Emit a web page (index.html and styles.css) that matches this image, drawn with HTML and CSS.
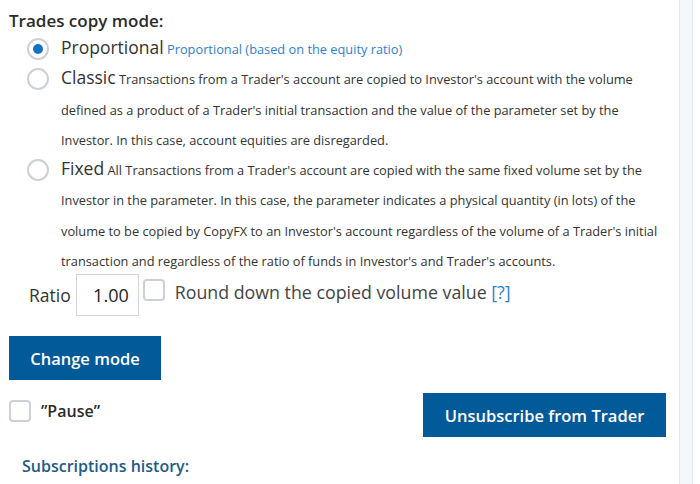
FILE: index.html
```html
<!DOCTYPE html>
<html>
<head>
<meta charset="utf-8">
<link rel="stylesheet" href="styles.css">
</head>
<body>
<div class="page">
  <main class="content">
    <h2 class="title">Trades copy mode:</h2>
    <div class="options">
      <div class="option">
        <span class="radio checked"></span>
        <p class="opt-text"><span class="opt-name">Proportional</span> <span class="opt-note">Proportional (based on the equity ratio)</span></p>
      </div>
      <div class="option">
        <span class="radio"></span>
        <p class="opt-text"><span class="opt-name">Classic</span> Transactions from a Trader's account are copied to Investor's account with the volume defined as a product of a Trader's initial transaction and the value of the parameter set by the Investor. In this case, account equities are disregarded.</p>
      </div>
      <div class="option">
        <span class="radio"></span>
        <p class="opt-text"><span class="opt-name">Fixed</span> All Transactions from a Trader's account are copied with the same fixed volume set by the Investor in the parameter. In this case, the parameter indicates a physical quantity (in lots) of the volume to be copied by CopyFX to an Investor's account regardless of the volume of a Trader's initial transaction and regardless of the ratio of funds in Investor's and Trader's accounts.</p>
      </div>
    </div>
    <div class="ratio-row">
      <span class="ratio-label">Ratio</span>
      <span class="ratio-input">1.00</span>
      <span class="checkbox"></span>
      <span class="round-label">Round down the copied volume value <span class="help">[?]</span></span>
    </div>
    <button class="btn btn-change">Change mode</button>
    <div class="pause-row">
      <div class="pause">
        <span class="checkbox"></span>
        <span class="pause-label">”Pause”</span>
      </div>
      <button class="btn btn-unsub">Unsubscribe from Trader</button>
    </div>
    <h3 class="history">Subscriptions history:</h3>
  </main>
  <div class="side-strip"></div>
</div>
</body>
</html>
```

FILE: styles.css
```css
html, body {
  margin: 0;
  padding: 0;
  background: #ffffff;
  font-family: "Open Sans", "Noto Sans", sans-serif;
  color: #333333;
  overflow: hidden;
}
.page {
  display: flex;
  width: 700px;
  height: 484px;
}
.content {
  width: 657px;
  padding: 0 13px 0 9px;
}
.side-strip {
  width: 12px;
  height: 484px;
  background: #f4f8fb;
  border-left: 1px solid #e3e8ee;
  border-right: 1px solid #e3e8ee;
}
.title {
  margin: 8px 0 0 0;
  font-size: 17px;
  line-height: 26px;
  font-weight: 600;
  color: #2b2b2b;
}
.options {
  padding-left: 18px;
}
.option {
  display: flex;
  align-items: flex-start;
  gap: 12px;
}
.radio {
  flex: none;
  width: 18px;
  height: 18px;
  margin-top: 4px;
  border: 2px solid #ccd1d8;
  border-radius: 50%;
  display: flex;
  align-items: center;
  justify-content: center;
}
.radio.checked::after {
  content: "";
  width: 10px;
  height: 10px;
  border-radius: 50%;
  background: #1473c7;
}
.opt-text {
  margin: 0;
  font-size: 12.8px;
  line-height: 30.3px;
  color: #333333;
  width: 605px;
}
.opt-name {
  font-size: 17.5px;
  line-height: 20px;
  color: #333333;
}
.opt-note {
  color: #2f7fcf;
}
.ratio-row {
  display: flex;
  align-items: center;
  margin-top: -2px;
  padding-left: 20px;
  height: 42px;
}
.ratio-label {
  font-size: 17.5px;
  margin-right: 5px;
}
.ratio-input {
  display: flex;
  align-items: center;
  justify-content: flex-end;
  box-sizing: border-box;
  width: 63px;
  height: 42px;
  padding-right: 9px;
  border: 1px solid #d1d6dc;
  font-size: 18px;
  color: #222;
}
.checkbox {
  flex: none;
  width: 22px;
  height: 22px;
  box-sizing: border-box;
  border: 2px solid #ccd1d8;
  border-radius: 4px;
  background: #fff;
}
.ratio-row .checkbox {
  margin-left: 4px;
  margin-top: -10px;
}
.round-label {
  margin-left: 10px;
  margin-top: -6px;
  font-size: 17.8px;
  color: #444;
}
.help {
  color: #2f7fcf;
}
.btn {
  display: block;
  border: none;
  background: #035a99;
  color: #ffffff;
  font-family: "Open Sans", "Noto Sans", sans-serif;
  font-size: 16.5px;
  font-weight: 600;
  height: 44px;
  padding: 0;
  cursor: pointer;
}
.btn-change {
  margin-top: 20px;
  width: 152px;
}
.pause-row {
  display: flex;
  justify-content: space-between;
  align-items: flex-start;
  margin-top: 13px;
}
.pause {
  display: flex;
  align-items: center;
  gap: 10px;
  margin-top: 7px;
}
.pause-label {
  font-size: 16px;
  font-weight: 600;
  color: #2b2b2b;
}
.btn-unsub {
  width: 243px;
}
.history {
  margin: 18px 0 0 13px;
  font-size: 16px;
  font-weight: 600;
  color: #1d5b86;
}
```
